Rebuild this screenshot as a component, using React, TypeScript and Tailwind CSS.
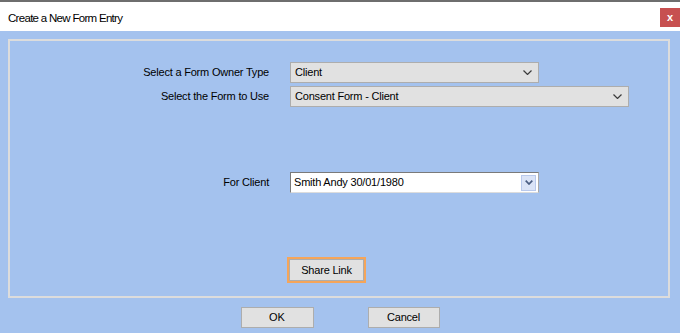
const font = "font-['Liberation_Sans',Arial,sans-serif]";

function Chevron() {
  return (
    <svg width="9" height="5" viewBox="0 0 9 5" className="shrink-0">
      <path d="M0.5 0.5 L4.5 4.5 L8.5 0.5" fill="none" stroke="#3c3c3c" strokeWidth="1.2" />
    </svg>
  );
}

function FlatSelect({ value, width }: { value: string; width: string }) {
  return (
    <div
      className={`${width} h-[21px] flex items-center justify-between pl-[4px] pr-[6px] bg-[#e1e1e1] border border-[#adadad] text-[11px] tracking-[-0.2px] text-black`}
    >
      <span>{value}</span>
      <Chevron />
    </div>
  );
}

function ComboBox({ value }: { value: string }) {
  return (
    <div className="w-[249px] h-[21px] flex items-center justify-between pl-[3px] pr-[2px] bg-white border border-[#7a7a7a] border-r-[#a9a9a9] border-b-[#dcdcdc] text-[11px] tracking-[-0.2px] text-black">
      <span>{value}</span>
      <div className="w-[15px] h-[16px] flex items-center justify-center bg-[#dbe4f7] border border-[#b9c9ec]">
        <svg width="8" height="5" viewBox="0 0 8 5">
          <path d="M0.7 0.7 L4 4 L7.3 0.7" fill="none" stroke="#4a5d82" strokeWidth="1.7" />
        </svg>
      </div>
    </div>
  );
}

function Row({ label, children }: { label: string; children: React.ReactNode }) {
  return (
    <div className="flex items-center">
      <div className="w-[259px] text-right text-[11px] tracking-[-0.2px] text-black">{label}</div>
      <div className="ml-[21px]">{children}</div>
    </div>
  );
}

export default function App() {
  return (
    <div className={`${font} w-[680px] h-[333px] flex flex-col overflow-hidden bg-[#a4c2ee]`}>
      {/* title bar */}
      <div className="h-[31px] shrink-0 bg-white border-t-2 border-[#6e6e6e] flex items-start justify-between">
        <div className="pl-[8px] pt-[8px] text-[11.5px] tracking-[-0.7px] text-black">Create a New Form Entry</div>
        <div className="mt-[6px] w-[20px] h-[19px] bg-[#c75050] flex items-center justify-center text-white text-[11px] font-bold leading-none">
          x
        </div>
      </div>

      {/* form panel */}
      <div className="mx-[8px] mt-[8px] w-[662px] h-[259px] shrink-0 border-2 border-[#dcdcdc] flex flex-col pt-[21px]">
        <div className="flex flex-col gap-[3px]">
          <Row label="Select a Form Owner Type">
            <FlatSelect value="Client" width="w-[249px]" />
          </Row>
          <Row label="Select the Form to Use">
            <FlatSelect value="Consent Form - Client" width="w-[339px]" />
          </Row>
        </div>
        <div className="mt-[65px]">
          <Row label="For Client">
            <ComboBox value="Smith Andy 30/01/1980" />
          </Row>
        </div>
        <div className="mt-[64px] ml-[277px]">
          <div className="w-[79px] h-[26px] border-2 border-[#f5a55a] flex">
            <div className="flex-1 bg-[#e1e1e1] border border-[#adadad] flex items-center justify-center text-[11px] tracking-[-0.2px] text-black">
              Share Link
            </div>
          </div>
        </div>
      </div>

      {/* buttons */}
      <div className="mt-[9px] flex justify-center gap-[54px]">
        <button className="w-[73px] h-[21px] bg-[#e1e1e1] border border-[#adadad] text-[11px] text-black">OK</button>
        <button className="w-[72px] h-[21px] bg-[#e1e1e1] border border-[#adadad] text-[11px] tracking-[-0.2px] text-black">Cancel</button>
      </div>
    </div>
  );
}
